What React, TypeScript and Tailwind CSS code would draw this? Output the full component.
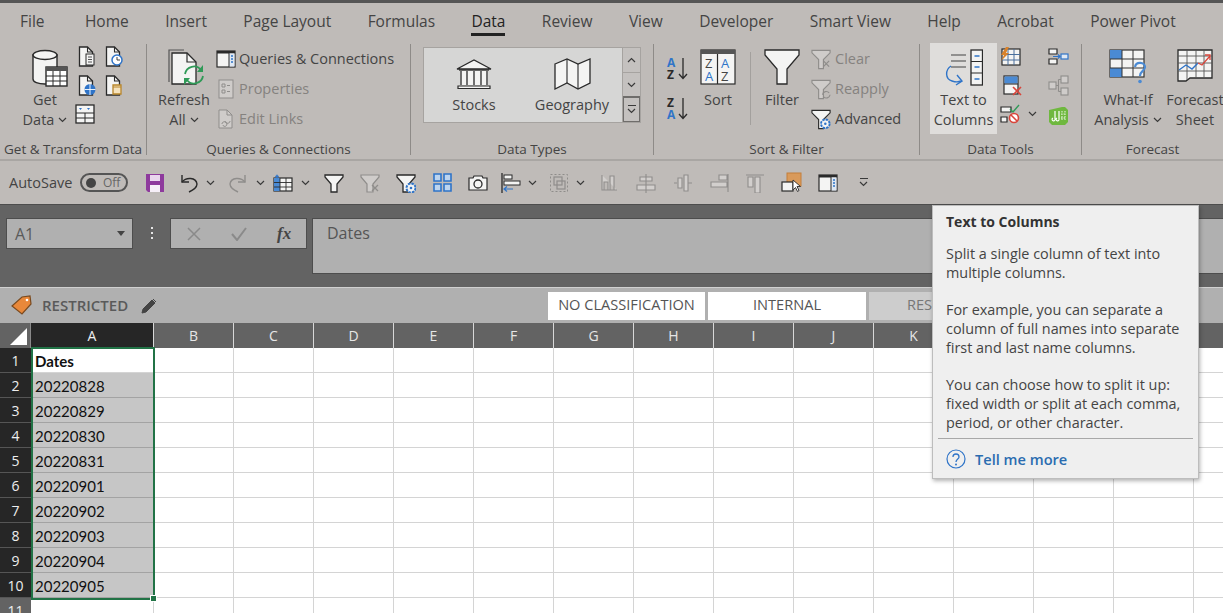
import type { ReactNode } from "react"

const ink = "#2a2a2a"
const off = "#8f8d8b"
const blue = "#2f74c8"
const paper = "#f4f4f3"

const tabs = ["File", "Home", "Insert", "Page Layout", "Formulas", "Data", "Review", "View", "Developer", "Smart View", "Help", "Acrobat", "Power Pivot"]
// L, M and N sit behind the tooltip, so their headers stay empty
const columns = ["B", "C", "D", "E", "F", "G", "H", "I", "J", "K", "", "", "", ""]
const dates = ["20220828", "20220829", "20220830", "20220831", "20220901", "20220902", "20220903", "20220904", "20220905"]

function Chevron({ className = "" }: { className?: string }) {
    return (
        <svg width="9" height="6" viewBox="0 0 9 6" className={className}>
            <path d="M1 1l3.5 3.5L8 1" fill="none" stroke="#3a3a3a" strokeWidth="1.2" />
        </svg>
    )
}

function Doc({ children, color = ink }: { children?: ReactNode; color?: string }) {
    return (
        <svg width="20" height="21" viewBox="0 0 20 21">
            <path d="M1.5 1h8l5 5v14h-13z" fill={paper} stroke={color} strokeWidth="1.3" />
            <path d="M9.5 1v5h5" fill="none" stroke={color} strokeWidth="1.1" />
            {children}
        </svg>
    )
}

function GetDataIcon() {
    return (
        <svg width="36" height="38" viewBox="0 0 36 38">
            <path d="M1 6v24c0 3 5 5 12 5s12-2 12-5V6z" fill={paper} stroke={ink} strokeWidth="1.4" />
            <ellipse cx="13" cy="6" rx="12" ry="4.5" fill={paper} stroke={ink} strokeWidth="1.4" />
            <rect x="14" y="18" width="21" height="19" fill="#fff" stroke={ink} strokeWidth="1.4" />
            <rect x="14" y="18" width="21" height="4" fill="#555" />
            <path d="M21 22v15M28 22v15M14 27h21M14 32h21" stroke={ink} strokeWidth="1" />
        </svg>
    )
}

function TableHeaderIcon() {
    return (
        <svg width="20" height="20" viewBox="0 0 20 20">
            <rect x="1" y="1" width="18" height="18" fill={paper} stroke={ink} strokeWidth="1.3" />
            <path d="M1 9h18M1 14h18M10 9v10" stroke={ink} strokeWidth="1" />
            <path d="M4 4h3l-1.5 2zM12 4h3l-1.5 2z" fill={blue} />
        </svg>
    )
}

function RefreshIcon() {
    return (
        <svg width="38" height="40" viewBox="0 0 38 40">
            <path d="M1 33V1h15" fill="none" stroke="#555" strokeWidth="1.2" />
            <path d="M4 35V4h15l9 9v22z" fill={paper} stroke={ink} strokeWidth="1.3" />
            <path d="M19 4v9h9" fill="none" stroke={ink} strokeWidth="1.2" />
            <path d="M17 25a9 9 0 0 1 16-4M35 27a9 9 0 0 1-16 4" fill="none" stroke="#2f9a57" strokeWidth="1.8" />
            <path d="M35 16v7h-6zM16 36v-7h6z" fill="#2f9a57" />
        </svg>
    )
}

function QueriesIcon() {
    return (
        <svg width="20" height="18" viewBox="0 0 20 18">
            <rect x="1" y="1" width="18" height="16" fill={paper} stroke={ink} strokeWidth="1.2" />
            <rect x="1" y="1" width="18" height="2.5" fill={ink} />
            <rect x="13" y="3.5" width="5.5" height="13" fill="#dfe8f3" />
            <path d="M13 3v14" stroke={ink} strokeWidth="1" />
            <path d="M15 6h2M15 9h2M15 12h2" stroke={blue} strokeWidth="1.4" />
        </svg>
    )
}

function PropertiesIcon() {
    return (
        <svg width="16" height="20" viewBox="0 0 16 20">
            <rect x="1" y="1" width="14" height="18" fill="#cfccca" stroke={off} strokeWidth="1" />
            <path d="M4 5h3v3H4zM4 11h3v3H4zM9 6.5h3M9 12.5h3" fill="none" stroke={off} strokeWidth="1" />
        </svg>
    )
}

function EditLinksIcon() {
    return (
        <svg width="16" height="20" viewBox="0 0 16 20">
            <path d="M1 1h8l5 5v13H1z" fill="#cfccca" stroke={off} strokeWidth="1" />
            <path d="M9 1v5h5" fill="none" stroke={off} strokeWidth="1" />
            <path d="M4 15c0-3 5-3 5 0s-4 3-4 1M12 12c0 3-5 3-5 0" fill="none" stroke={off} strokeWidth="1" />
        </svg>
    )
}

function StocksIcon() {
    return (
        <svg width="36" height="31" viewBox="0 0 36 31">
            <path d="M1 10L18 1l17 9z" fill={paper} stroke={ink} strokeWidth="1.3" />
            <rect x="4" y="12" width="28" height="14" fill={paper} />
            <path d="M5 12v14M11 12v14M18 12v14M25 12v14M31 12v14" stroke={ink} strokeWidth="1.3" />
            <path d="M2 27h32v2.5H2z" fill={paper} stroke={ink} strokeWidth="1.2" />
            <path d="M3 11h30" stroke={ink} strokeWidth="1.3" />
        </svg>
    )
}

function GeographyIcon() {
    return (
        <svg width="37" height="32" viewBox="0 0 37 32">
            <path d="M1 6l12-5 11 5 12-5v24l-12 6-11-6-12 6z" fill={paper} stroke={ink} strokeWidth="1.3" />
            <path d="M13 1v24M24 6v25" stroke={ink} strokeWidth="1.1" />
        </svg>
    )
}

function SortSmallIcon({ top, bottom, topColor, bottomColor }: { top: string; bottom: string; topColor: string; bottomColor: string }) {
    return (
        <svg width="23" height="24" viewBox="0 0 23 24" className="overflow-visible font-['Open_Sans',sans-serif]">
            <text x="0" y="10" fontSize="12" fontWeight="700" fill={topColor}>{top}</text>
            <text x="0" y="22" fontSize="12" fontWeight="700" fill={bottomColor}>{bottom}</text>
            <path d="M16 1v20M12 17l4 4.5 4-4.5" fill="none" stroke={ink} strokeWidth="1.3" />
        </svg>
    )
}

function SortIcon() {
    return (
        <svg width="36" height="36" viewBox="0 0 36 36" className="font-['Open_Sans',sans-serif]">
            <rect x="1" y="1" width="34" height="34" fill={paper} stroke={ink} strokeWidth="1.2" />
            <rect x="1" y="1" width="34" height="4" fill="#555" />
            <path d="M17.5 5v30" stroke={ink} strokeWidth="1.2" />
            <text x="5" y="19" fontSize="13" fill="#444">Z</text>
            <text x="5" y="32" fontSize="13" fill={blue}>A</text>
            <text x="21" y="19" fontSize="13" fill={blue}>A</text>
            <text x="21" y="32" fontSize="13" fill="#444">Z</text>
        </svg>
    )
}

function FilterIcon() {
    return (
        <svg width="36" height="36" viewBox="0 0 36 36">
            <path d="M1 1h34v5L23 20v15H13V20L1 6z" fill={paper} stroke={ink} strokeWidth="1.3" />
        </svg>
    )
}

function SmallFunnel({ color = ink, children }: { color?: string; children?: ReactNode }) {
    return (
        <svg width="22" height="21" viewBox="0 0 22 21">
            <path d="M1 1h19v2.5l-7 7V20H8v-9.5l-7-7z" fill={color === ink ? paper : "#cfccca"} stroke={color} strokeWidth="1.2" />
            {children}
        </svg>
    )
}

function Gear({ x, y }: { x: number; y: number }) {
    return (
        <g>
            <circle cx={x} cy={y} r="4.5" fill={paper} stroke={blue} strokeWidth="2" strokeDasharray="2.5 1" />
            <circle cx={x} cy={y} r="1.3" fill={blue} />
        </g>
    )
}

function TextToColumnsIcon() {
    return (
        <svg width="38" height="38" viewBox="0 0 38 38">
            <path d="M6 6h15M6 12h15M6 18h15" stroke="#444" strokeWidth="1.2" />
            <rect x="26" y="1" width="11.5" height="35" fill={paper} stroke={ink} strokeWidth="1.3" />
            <path d="M26 12.5h12M26 24h12" stroke={ink} strokeWidth="1.1" />
            <path d="M29.5 7h5M29.5 18h5M29.5 30h5" stroke={blue} strokeWidth="1.3" />
            <path d="M6 17c-6 4-6 13 1 15 3 1 7 1 9 0" fill="none" stroke={blue} strokeWidth="1.4" />
            <path d="M12 26l5 6-6 4" fill="none" stroke={blue} strokeWidth="1.4" />
        </svg>
    )
}

function FlashFillIcon() {
    return (
        <svg width="21" height="20" viewBox="0 0 21 20">
            <rect x="2" y="2" width="18" height="16" fill={paper} stroke={ink} strokeWidth="1.2" />
            <path d="M8 2v16M14 2v16M2 7.5h18M2 13h18" stroke="#4a6f9c" strokeWidth="1" />
            <path d="M6 0L1 8h3l-3 6 8-8H6l3-6z" fill="#d9822b" />
        </svg>
    )
}

function RemoveDuplicatesIcon() {
    return (
        <svg width="20" height="21" viewBox="0 0 20 21">
            <rect x="1" y="1" width="14" height="18" fill={paper} stroke={ink} strokeWidth="1.2" />
            <rect x="1.5" y="1.5" width="13" height="7" fill="#4a8ad4" />
            <path d="M1 9h14" stroke={ink} strokeWidth="1.1" />
            <path d="M10 12l8 8M18 12l-8 8" stroke="#d9453b" strokeWidth="1.6" />
        </svg>
    )
}

function DataValidationIcon() {
    return (
        <svg width="20" height="20" viewBox="0 0 20 20">
            <path d="M1 3h10v5H1zM1 13h6v5H1z" fill={paper} stroke={ink} strokeWidth="1.2" />
            <path d="M10 5l3 3 6-7" fill="none" stroke="#2f9a57" strokeWidth="1.4" />
            <circle cx="14" cy="14" r="4.5" fill="#fff" stroke="#d9453b" strokeWidth="1.6" />
            <path d="M11 11l6 6" stroke="#d9453b" strokeWidth="1.6" />
        </svg>
    )
}

function ConsolidateIcon() {
    return (
        <svg width="21" height="17" viewBox="0 0 21 17">
            <path d="M1 1h8v5H1zM1 11h8v5H1z" fill={paper} stroke={ink} strokeWidth="1.2" />
            <rect x="13" y="6" width="7" height="5" fill="#dfe8f3" stroke={blue} strokeWidth="1.2" />
            <path d="M5 8.5h7M10 6.5l2 2-2 2" fill="none" stroke={blue} strokeWidth="1.2" />
        </svg>
    )
}

function RelationshipsIcon() {
    return (
        <svg width="21" height="21" viewBox="0 0 21 21">
            <g fill="#cfccca" stroke={off} strokeWidth="1.1">
                <rect x="1" y="7" width="7" height="7" />
                <rect x="13" y="1" width="7" height="7" />
                <rect x="13" y="13" width="7" height="7" />
                <path d="M8 10.5h2.5M10.5 4.5v12M10.5 4.5H13M10.5 16.5H13" fill="none" />
            </g>
        </svg>
    )
}

function DataModelIcon() {
    return (
        <svg width="21" height="20" viewBox="0 0 21 20">
            <path d="M1 4l13-3h3l3 3v12l-3 3H4l-3-3z" fill="#6fb83f" />
            <path d="M7 5v8M7 13a1.5 1.5 0 1 1-2-1M11 5v8M11 13a1.5 1.5 0 1 1-2-1" fill="none" stroke="#fff" strokeWidth="1.2" />
            <path d="M14 5v10M17 5v10M13 8h5M13 12h5" stroke="#d8edc9" strokeWidth="1.2" strokeDasharray="1.5 1" />
        </svg>
    )
}

function WhatIfIcon() {
    return (
        <svg width="38" height="36" viewBox="0 0 38 36">
            <rect x="1" y="1" width="34" height="27" fill={paper} stroke="#333" strokeWidth="1.2" />
            <rect x="1" y="1" width="12" height="9" fill="#4a8ad4" />
            <rect x="1" y="19" width="12" height="9" fill="#4a8ad4" />
            <path d="M13 1v27M24 1v27M1 10h34M1 19h34" stroke="#333" strokeWidth="1" />
            <path d="M26 18c1-6 10-5 10 0 0 4-5 4-5 9" fill="none" stroke="#4a8ad4" strokeWidth="2.2" />
            <circle cx="31" cy="32.5" r="1.8" fill="#4a8ad4" />
        </svg>
    )
}

function ForecastIcon() {
    return (
        <svg width="36" height="33" viewBox="0 0 36 33">
            <path d="M1 1h34v28H13l-4 3H1z" fill={paper} stroke={ink} strokeWidth="1.3" />
            <path d="M1 7h34M1 14h34M1 22h34M10 1v30M19 1v28M27 1v28" stroke="#555" strokeWidth="0.9" />
            <path d="M2 21l7-5 6 4 6-6" fill="none" stroke={blue} strokeWidth="1.4" />
            <path d="M21 14l4 2 8-9M28 6h5v5" fill="none" stroke="#d9453b" strokeWidth="1.3" />
        </svg>
    )
}

function SaveIcon() {
    return (
        <svg width="20" height="20" viewBox="0 0 20 20">
            <path d="M1 1h18v18H3l-2-2z" fill="#8e3a9d" />
            <rect x="5" y="2" width="10" height="6" fill="#e9d6ee" />
            <rect x="5" y="12" width="10" height="7" fill="#f6eff8" />
        </svg>
    )
}

function UndoIcon({ color = ink }: { color?: string }) {
    return (
        <svg width="19" height="20" viewBox="0 0 19 20">
            <path d="M2 2v7h7" fill="none" stroke={color} strokeWidth="1.4" />
            <path d="M2 9c4-5 14-5 15 2 0 4-4 6-8 8" fill="none" stroke={color} strokeWidth="1.4" />
        </svg>
    )
}

function FormTableIcon() {
    return (
        <svg width="20" height="18" viewBox="0 0 20 18">
            <rect x="1" y="4" width="18" height="13" fill={paper} stroke={ink} strokeWidth="1.2" />
            <rect x="1" y="4" width="6" height="13" fill="#4a8ad4" />
            <path d="M7 4v13M13 4v13M1 8.5h18M1 13h18" stroke={ink} strokeWidth="0.9" />
            <path d="M2 2.5h4M4 .5v4M3 1l2 3M5 1L3 4" stroke={blue} strokeWidth="0.8" />
        </svg>
    )
}

function BlueGridIcon() {
    return (
        <svg width="19" height="19" viewBox="0 0 19 19">
            <path d="M1 1h7v7H1zM11 1h7v7h-7zM1 11h7v7H1zM11 11h7v7h-7z" fill="#bcd4ef" stroke="#2f74c8" strokeWidth="1.6" />
        </svg>
    )
}

function CameraIcon() {
    return (
        <svg width="20" height="16" viewBox="0 0 20 16">
            <path d="M1 3h4l1-2h8l1 2h4v12H1z" fill={paper} stroke={ink} strokeWidth="1.2" />
            <circle cx="10" cy="9" r="4" fill="none" stroke={ink} strokeWidth="1.3" />
        </svg>
    )
}

function AlignIcon() {
    return (
        <svg width="20" height="20" viewBox="0 0 20 20">
            <path d="M1 0v20" stroke={ink} strokeWidth="1.3" />
            <rect x="3" y="2" width="8" height="4" fill={paper} stroke={ink} />
            <rect x="3" y="8" width="16" height="4" fill={paper} stroke={ink} />
            <path d="M3 16h9M6 13.5L3 16l3 2.5" fill="none" stroke={blue} strokeWidth="1.2" />
        </svg>
    )
}

function GroupIcon() {
    return (
        <svg width="20" height="20" viewBox="0 0 20 20">
            <rect x="1.5" y="1.5" width="17" height="17" fill="none" stroke={off} strokeDasharray="2 2" />
            <rect x="5" y="4" width="8" height="8" fill="none" stroke={off} strokeWidth="1.2" />
            <rect x="8" y="8" width="8" height="8" fill="none" stroke={off} strokeWidth="1.2" />
        </svg>
    )
}

function GrayBars({ d }: { d: string }) {
    return (
        <svg width="20" height="20" viewBox="0 0 20 20">
            <path d={d} fill="#d2cfcd" stroke={off} strokeWidth="1.1" />
        </svg>
    )
}

function SelectPaneIcon() {
    return (
        <svg width="21" height="21" viewBox="0 0 21 21">
            <rect x="6" y="1" width="14" height="13" fill="#d99a5b" stroke="#c47f3a" />
            <rect x="1" y="10" width="11" height="9" fill={paper} stroke={ink} strokeWidth="1.2" />
            <path d="M12 8v10l2.5-2.5 2 4 1.5-1-2-4h3.5z" fill="#fff" stroke={ink} strokeWidth="0.9" />
        </svg>
    )
}

function BigButton({ icon, lines, width, arrow, iconClass = "" }: { icon: ReactNode; lines: string[]; width: string; arrow?: boolean; iconClass?: string }) {
    return (
        <div className={`flex shrink-0 flex-col items-center ${width}`}>
            <div className={`flex h-[46px] items-start justify-center pt-[5px] ${iconClass}`}>{icon}</div>
            {lines.map((line, i) => (
                <div key={line} className="flex items-center gap-[4px] whitespace-nowrap text-[14.5px] leading-[20px]">
                    {line}
                    {arrow && i === lines.length - 1 && <Chevron />}
                </div>
            ))}
        </div>
    )
}

function SmallButton({ icon, label, disabled }: { icon: ReactNode; label: string; disabled?: boolean }) {
    return (
        <div className={`flex h-[30px] items-center gap-[3px] whitespace-nowrap text-[14.5px] ${disabled ? "text-[#85827f]" : ""}`}>
            <div className="flex w-[21px] justify-center">{icon}</div>
            {label}
        </div>
    )
}

function Group({ label, className, children }: { label: string; className: string; children: ReactNode }) {
    return (
        <div className={`h-[111px] shrink-0 border-r border-[#8e8b88] ${className}`}>
            <div className="flex h-[95px]">{children}</div>
            <div className="h-[16px] whitespace-nowrap text-center text-[13.5px] leading-[20px]">{label}</div>
        </div>
    )
}

function SheetRow({ row }: { row: number }) {
    const selected = row < 10
    return (
        <>
            <div className={`flex h-[25px] items-center justify-center border-b border-[#555] font-['Open_Sans',sans-serif] text-[14px] text-[#eee] ${selected ? "bg-[#262626]" : "bg-[#636363]"}`}>
                {row + 1}
            </div>
            <div className={`flex h-[25px] items-center border-b border-r border-[#d4d4d4] pl-[4px] pt-[3px] ${row > 0 && selected ? "border-b-[#a3a3a3] bg-[#c6c6c6]" : "bg-white"} ${row === 0 ? "font-bold" : ""}`}>
                {row === 0 ? "Dates" : dates[row - 1]}
            </div>
            {columns.map((col, i) => (
                <div key={i} className="h-[25px] border-b border-r border-[#d4d4d4] bg-white" />
            ))}
        </>
    )
}

export default function App() {
    return (
        <div className="relative h-[613px] w-[1223px] overflow-hidden bg-white font-['Open_Sans',sans-serif] text-[#444]">
            <div className="h-[3px] bg-[#555]" />

            {/* ribbon */}
            <div className="h-[158px] border-b-2 border-[#a9a6a3] bg-[#bfbbb8]">
                <div className="flex h-[41px] gap-[36.4px] pl-[20px] text-[15.5px] leading-[36px]">
                    {tabs.map((tab) => (
                        <div key={tab} className={`whitespace-nowrap ${tab === "Data" ? "relative text-[#222]" : ""} ${tab === "Home" ? "ml-[4px]" : ""}`}>
                            {tab}
                            {tab === "Data" && <div className="absolute bottom-[8px] left-0 right-0 h-[3px] bg-[#222]" />}
                        </div>
                    ))}
                </div>
                <div className="flex">
                    <Group label="Get & Transform Data" className="w-[147px]">
                        <div className="pl-[22px]">
                            <BigButton icon={<GetDataIcon />} lines={["Get", "Data"]} width="w-[46px]" iconClass="pl-[9px]" arrow />
                        </div>
                        <div className="ml-[10px] grid grid-cols-[27px_20px] grid-rows-[29px_29px_29px] pt-[2px]">
                            <Doc><rect x="8" y="8" width="8" height="11" fill={paper} stroke={ink} /><path d="M10 11h4M10 13.5h4M10 16h4" stroke={ink} strokeWidth="0.8" /></Doc>
                            <Doc><circle cx="12" cy="14" r="5" fill="#fff" stroke={blue} strokeWidth="1.5" /><path d="M12 11v3h3" fill="none" stroke={ink} strokeWidth="0.9" /></Doc>
                            <Doc><circle cx="12" cy="14.5" r="5.5" fill={blue} /><path d="M6.5 14.5h11M12 9v11" stroke="#fff" strokeWidth="0.9" /></Doc>
                            <Doc><path d="M8 10h8v9H8z" fill="#f6e3bd" stroke="#b8862b" strokeWidth="1.3" /><path d="M8 12h8" stroke="#b8862b" /></Doc>
                            <div className="-ml-[3px]"><TableHeaderIcon /></div>
                        </div>
                    </Group>
                    <Group label="Queries & Connections" className="w-[264px]">
                        <div className="pl-[12px]">
                            <BigButton icon={<RefreshIcon />} lines={["Refresh", "All"]} width="w-[50px]" iconClass="pl-[5px]" arrow />
                        </div>
                        <div className="ml-[6px]">
                            <SmallButton icon={<QueriesIcon />} label="Queries & Connections" />
                            <SmallButton icon={<PropertiesIcon />} label="Properties" disabled />
                            <SmallButton icon={<EditLinksIcon />} label="Edit Links" disabled />
                        </div>
                    </Group>
                    <Group label="Data Types" className="w-[243px]">
                        <div className="ml-[12px] mt-[3px] flex h-[76px] w-[218px] border border-[#a6a3a0] bg-[#d6d6d5]">
                            <div className="flex flex-1">
                                <div className="flex w-[100px] flex-col items-center pt-[11px]">
                                    <StocksIcon />
                                    <div className="mt-[5px] text-[14.5px] leading-[20px]">Stocks</div>
                                </div>
                                <div className="flex w-[96px] flex-col items-center pt-[10px]">
                                    <GeographyIcon />
                                    <div className="mt-[5px] text-[14.5px] leading-[20px]">Geography</div>
                                </div>
                            </div>
                            <div className="flex w-[18px] shrink-0 flex-col border-l border-[#a6a3a0] bg-[#c4c1bf]">
                                <div className="flex h-[25px] items-center justify-center border-b border-[#a6a3a0]"><Chevron className="rotate-180" /></div>
                                <div className="flex h-[24px] items-center justify-center border-b border-[#6f6d6b]"><Chevron /></div>
                                <div className="flex flex-1 flex-col items-center justify-center gap-[2px] border border-[#6f6d6b]">
                                    <div className="h-[1px] w-[8px] bg-[#3a3a3a]" />
                                    <Chevron />
                                </div>
                            </div>
                        </div>
                    </Group>
                    <Group label="Sort & Filter" className="w-[266px]">
                        <div className="ml-[13px] flex flex-col gap-[16px] pt-[13px]">
                            <SortSmallIcon top="A" bottom="Z" topColor={blue} bottomColor={ink} />
                            <SortSmallIcon top="Z" bottom="A" topColor={ink} bottomColor={blue} />
                        </div>
                        <div className="ml-[9px]">
                            <BigButton icon={<SortIcon />} lines={["Sort"]} width="w-[38px]" />
                        </div>
                        <div className="ml-[13px] mt-[8px] h-[73px] w-[1px] bg-[#a3a09d]" />
                        <div className="ml-[13px]">
                            <BigButton icon={<FilterIcon />} lines={["Filter"]} width="w-[36px]" />
                        </div>
                        <div className="ml-[11px]">
                            <SmallButton icon={<SmallFunnel color={off}><path d="M13 12l6 6M19 12l-6 6" stroke={off} strokeWidth="1.3" /></SmallFunnel>} label="Clear" disabled />
                            <SmallButton icon={<SmallFunnel color={off}><path d="M12 16a4 4 0 0 1 7-2M20 16a4 4 0 0 1-7 2" fill="none" stroke={off} strokeWidth="1.2" /></SmallFunnel>} label="Reapply" disabled />
                            <SmallButton icon={<SmallFunnel><Gear x={15} y={15} /></SmallFunnel>} label="Advanced" />
                        </div>
                    </Group>
                    <Group label="Data Tools" className="w-[162px]">
                        <div className="-mt-[1px] ml-[10px] h-[91px] w-[67px] bg-[#dfdddb]">
                            <div className="mt-[1px]">
                                <BigButton icon={<TextToColumnsIcon />} lines={["Text to", "Columns"]} width="w-[67px]" />
                            </div>
                        </div>
                        <div className="ml-[3px] flex flex-col gap-[8px] pt-[3px]">
                            <FlashFillIcon />
                            <div className="pl-[3px]"><RemoveDuplicatesIcon /></div>
                            <div className="flex items-center gap-[8px]">
                                <DataValidationIcon />
                                <Chevron />
                            </div>
                        </div>
                        <div className="ml-[11px] flex flex-col gap-[10px] pt-[4px]">
                            <ConsolidateIcon />
                            <RelationshipsIcon />
                            <DataModelIcon />
                        </div>
                    </Group>
                    <div className="h-[111px] flex-1">
                        <div className="flex">
                            <div className="ml-[12px]">
                                <BigButton icon={<WhatIfIcon />} lines={["What-If", "Analysis"]} width="w-[68px]" arrow />
                            </div>
                            <div className="ml-[5px]">
                                <BigButton icon={<ForecastIcon />} lines={["Forecast", "Sheet"]} width="w-[56px]" />
                            </div>
                        </div>
                        <div className="mt-[9px] w-[141px] text-center text-[13.5px] leading-[20px]">Forecast</div>
                    </div>
                </div>
            </div>

            {/* quick access toolbar */}
            <div className="flex h-[43px] items-center bg-[#bfbbb8] pl-[9px] text-[14.5px]">
                <span className="w-[63px] whitespace-nowrap">AutoSave</span>
                <div className="ml-[8px] flex h-[19px] w-[48px] items-center rounded-full border-2 border-[#555] pl-[4px]">
                    <div className="h-[10px] w-[10px] rounded-full bg-[#444]" />
                    <span className="ml-[7px] text-[12px] leading-none text-[#666]">Off</span>
                </div>
                <div className="ml-[17px]"><SaveIcon /></div>
                <div className="ml-[15px]"><UndoIcon /></div>
                <Chevron className="ml-[7px]" />
                <div className="ml-[13px] -scale-x-100"><UndoIcon color={off} /></div>
                <Chevron className="ml-[9px]" />
                <div className="ml-[8px]"><FormTableIcon /></div>
                <Chevron className="ml-[8px]" />
                <svg width="20" height="20" viewBox="0 0 20 20" className="ml-[14px]"><path d="M1 2h18v2l-6 7v8H7v-8L1 4z" fill={paper} stroke={ink} strokeWidth="1.3" /></svg>
                <svg width="20" height="20" viewBox="0 0 20 20" className="ml-[16px]"><path d="M1 2h18v2l-6 7v8H7v-8L1 4z" fill="#cfccca" stroke={off} strokeWidth="1.2" /><path d="M12 12l6 6M18 12l-6 6" stroke={off} strokeWidth="1.3" /></svg>
                <svg width="20" height="20" viewBox="0 0 20 20" className="ml-[16px]"><path d="M1 2h18v2l-6 7v8H7v-8L1 4z" fill={paper} stroke={ink} strokeWidth="1.3" /><Gear x={15} y={15} /></svg>
                <div className="ml-[17px]"><BlueGridIcon /></div>
                <div className="ml-[16px]"><CameraIcon /></div>
                <div className="ml-[13px]"><AlignIcon /></div>
                <Chevron className="ml-[7px]" />
                <div className="ml-[12px]"><GroupIcon /></div>
                <Chevron className="ml-[7px]" />
                <div className="ml-[14px]"><GrayBars d="M3 2v15h15M5 9h4v8H5zM11 3h4v14h-4z" /></div>
                <div className="ml-[17px]"><GrayBars d="M4 4h12v4H4zM1 12h18v5H1zM10 1v19" /></div>
                <div className="ml-[17px]"><GrayBars d="M1 10h3M5 5h4v10H5zM11 2h4v16h-4zM15 10h4" /></div>
                <div className="ml-[16px]"><GrayBars d="M19 1v18M10 2h8v5h-8zM2 9h16v5H2z" /></div>
                <div className="ml-[16px]"><GrayBars d="M1 2h18M3 4h5v10H3zM10 4h5v16h-5z" /></div>
                <div className="ml-[16px]"><SelectPaneIcon /></div>
                <div className="ml-[16px]"><QueriesIcon /></div>
                <div className="ml-[21px] flex flex-col items-center gap-[2px]">
                    <div className="h-[1px] w-[8px] bg-[#3a3a3a]" />
                    <Chevron />
                </div>
            </div>

            {/* formula area */}
            <div className="h-[83px] border-t border-[#4d4d4d] bg-[#636363] pt-[13px]">
                <div className="flex items-start pl-[6px]">
                    <div className="flex h-[31px] w-[127px] items-center justify-between border border-[#4d4d4d] bg-[#b0b0b0] pl-[8px] pr-[7px] text-[16px] text-[#5a5a5a]">
                        A1
                        <div className="h-0 w-0 border-x-[4px] border-t-[5px] border-x-transparent border-t-[#444]" />
                    </div>
                    <div className="ml-[18px] mt-[9px] flex flex-col gap-[3px]">
                        <div className="h-[2px] w-[2px] bg-[#e6e6e6]" />
                        <div className="h-[2px] w-[2px] bg-[#e6e6e6]" />
                        <div className="h-[2px] w-[2px] bg-[#e6e6e6]" />
                    </div>
                    <div className="ml-[17px] flex h-[31px] w-[137px] items-center border border-[#4d4d4d] bg-[#b0b0b0]">
                        <svg width="14" height="14" viewBox="0 0 14 14" className="ml-[16px]"><path d="M1 1l12 12M13 1L1 13" stroke="#8a8a8a" strokeWidth="1.5" /></svg>
                        <svg width="16" height="14" viewBox="0 0 16 14" className="ml-[30px]"><path d="M1 7l5 6L15 1" fill="none" stroke="#8a8a8a" strokeWidth="2" /></svg>
                        <span className="ml-[30px] font-['Liberation_Serif',serif] text-[17px] font-bold italic leading-none text-[#444]">fx</span>
                    </div>
                    <div className="ml-[5px] h-[56px] flex-1 border-b border-l border-t border-[#4d4d4d] bg-[#b0b0b0] pl-[14px] pt-[4px] text-[16px] leading-[20px] text-[#555]">Dates</div>
                </div>
            </div>

            {/* classification bar */}
            <div className="flex h-[36px] items-center border-t border-[#d0d0d0] bg-[#b0b0b0] pl-[11px]">
                <svg width="21" height="21" viewBox="0 0 21 21">
                    <path d="M1 11L11 2l8-1 1 8-9 10z" fill="#e8883a" stroke="#7a4a1f" strokeWidth="1.2" />
                    <circle cx="16" cy="5" r="1.3" fill="#fff" />
                </svg>
                <span className="ml-[10px] w-[88px] whitespace-nowrap text-[15px] font-semibold text-[#5a5a5a]">RESTRICTED</span>
                <svg width="16" height="16" viewBox="0 0 16 16" className="ml-[11px]"><path d="M1 15l1-4L11 2l3 3-9 9zM12 1l3 3" fill="#444" stroke="#444" /></svg>
                <div className="ml-[391px] flex h-[28px] w-[157px] items-center justify-center whitespace-nowrap bg-white pb-[1px] text-[14.6px] text-[#555]">NO CLASSIFICATION</div>
                <div className="ml-[3px] flex h-[28px] w-[158px] items-center justify-center bg-white pb-[1px] text-[14.6px] text-[#555]">INTERNAL</div>
                <div className="ml-[3px] flex h-[28px] w-[158px] items-center justify-center bg-[#cdcdcd] pb-[1px] text-[14.6px] text-[#777]">RESTRICTED</div>
            </div>

            {/* sheet */}
            <div className="grid grid-cols-[31px_123px_repeat(13,80px)_30px] font-['Lato',sans-serif] text-[15px] text-[#111]">
                <div className="flex h-[25px] items-end justify-end border-r border-[#8a8a8a] bg-[#636363] p-[3px]">
                    <div className="h-0 w-0 border-b-[17px] border-l-[17px] border-b-white border-l-transparent" />
                </div>
                <div className="flex h-[25px] items-center justify-center border-r border-[#d8d8d8] bg-[#262626] font-['Open_Sans',sans-serif] text-[14px] text-[#eee]">A</div>
                {columns.map((col, i) => (
                    <div key={i} className="flex h-[25px] items-center justify-center border-r border-[#d8d8d8] bg-[#636363] font-['Open_Sans',sans-serif] text-[14px] text-[#e6e6e6]">{col}</div>
                ))}
                {Array.from({ length: 11 }, (_, row) => (
                    <SheetRow key={row} row={row} />
                ))}
            </div>
            <div className="pointer-events-none absolute left-[31px] top-[347px] h-[253px] w-[124px] border-2 border-[#217346]" />
            <div className="absolute left-[150px] top-[595px] h-[7px] w-[7px] border border-white bg-[#217346]" />

            {/* tooltip */}
            <div className="absolute left-[932px] top-[205px] h-[274px] w-[267px] border border-[#bdbdbd] bg-[#efefef] px-[5px] pt-[6px] text-[14.4px] leading-[19px] text-[#444] shadow-[1px_2px_4px_rgba(0,0,0,0.3)]">
                <div className="pl-[8px] text-[14px] font-bold text-[#333]">Text to Columns</div>
                <div className="mt-[13px] pl-[8px]">Split a single column of text into<br />multiple columns.</div>
                <div className="mt-[18px] pl-[8px]">For example, you can separate a<br />column of full names into separate<br />first and last name columns.</div>
                <div className="mt-[18px] pl-[8px]">You can choose how to split it up:<br />fixed width or split at each comma,<br />period, or other character.</div>
                <div className="mt-[6px] h-[1px] bg-[#a8a8a8]" />
                <div className="mt-[10px] flex items-center gap-[9px] pl-[8px]">
                    <svg width="20" height="20" viewBox="0 0 20 20">
                        <circle cx="10" cy="10" r="9" fill="none" stroke="#2f74c8" strokeWidth="1.2" />
                        <path d="M7 8c0-4 6-4 6 0 0 2-3 2-3 5" fill="none" stroke="#2f74c8" strokeWidth="1.3" />
                        <circle cx="10" cy="15.5" r="1" fill="#2f74c8" />
                    </svg>
                    <span className="text-[14.6px] font-semibold text-[#2a6cb0]">Tell me more</span>
                </div>
            </div>
        </div>
    )
}
